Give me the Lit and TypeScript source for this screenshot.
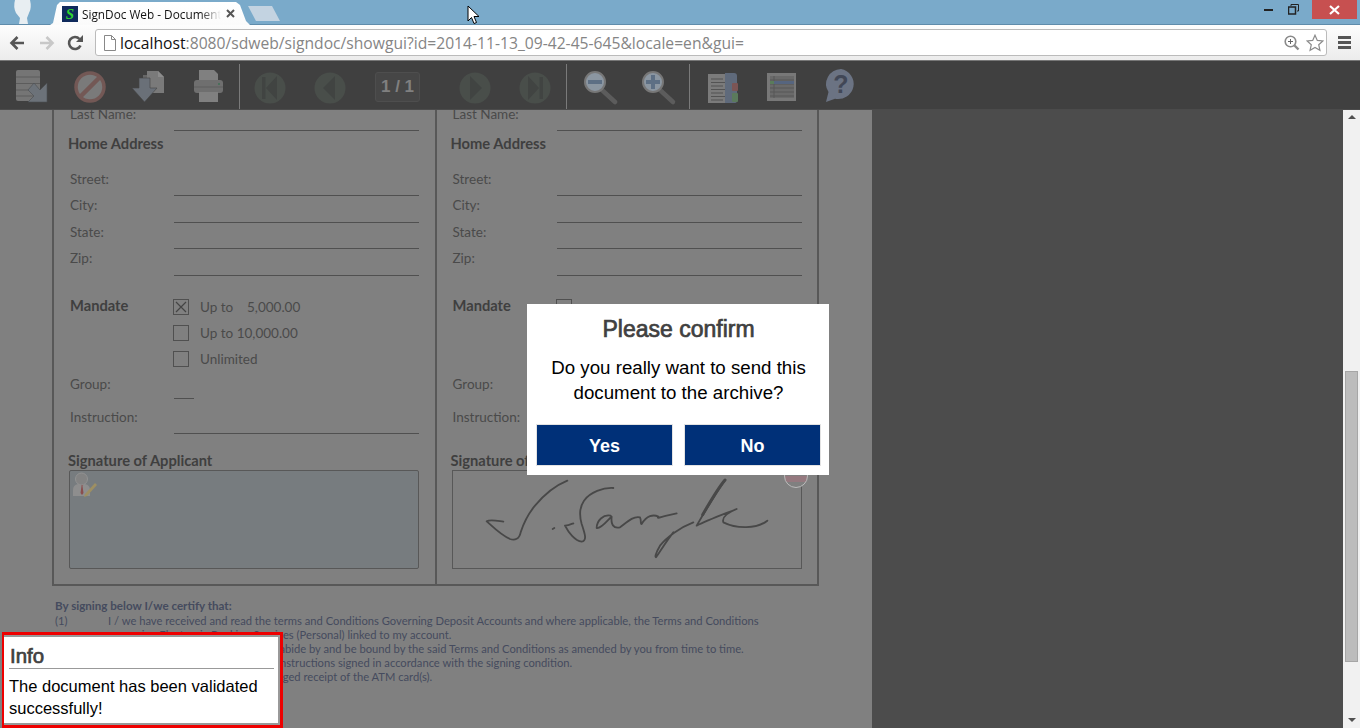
import { LitElement, html, css, svg } from "lit";
import { customElement } from "lit/decorators.js";

const toolIcons = {
  archive: svg`<path d="M4 11q0-2 2-2h20q2 0 2 2v29H6q-2 0-2-2z" fill="#757575"/><path d="M4 16h24M4 22.500h24M4 29h24M4 35h24" stroke="#5c5c5c" stroke-width="1"/><path d="M35 22V41H16l6-6-6-6 6-7 6 7z" fill="#6c7279" stroke="#4a4d50" stroke-width=".6"/>`,
  stop: svg`<circle cx="19" cy="26" r="14" fill="#7a7a7a" stroke="#735855" stroke-width="3.500"/><path d="M9 36L29 16" stroke="#735855" stroke-width="4.500"/>`,
  docs: svg`<path d="M13 14h6v16h-6z" fill="#676767"/><path d="M17 10h11l6 6v16H17z" fill="#7a7a7a"/><path d="M28 10v6h6" fill="#8c8c8c"/><path d="M9 17h11v10h7L14.500 41 2 27h7z" fill="#6a7078" stroke="#454545" stroke-width=".6"/>`,
  print: svg`<path d="M10 9h15l4 4v8H10z" fill="#808080"/><rect x="5" y="19" width="29" height="13" rx="3" fill="#6f6f6f"/><rect x="10" y="31" width="19" height="10" fill="#808080"/><path d="M5 26h29" stroke="#5f5f5f"/><circle cx="30" cy="23" r="1" fill="#3f6f55"/>`,
  first: svg`<circle cx="20" cy="27" r="15.500" fill="#494e4a"/><path d="M12 16h3.500v22H12zM27 15v24L16 27z" fill="#414442"/>`,
  prev: svg`<circle cx="20" cy="27" r="15.500" fill="#494e4a"/><path d="M25 15v24L13 27z" fill="#414442"/>`,
  next: svg`<circle cx="20" cy="27" r="15.500" fill="#494e4a"/><path d="M15 15v24L27 27z" fill="#414442"/>`,
  last: svg`<circle cx="20" cy="27" r="15.500" fill="#494e4a"/><path d="M28 16h-3.500v22H28zM13 15v24L24 27z" fill="#414442"/>`,
  out: svg`<path d="M24 29l13 12" stroke="#5c5c5c" stroke-width="4.500" stroke-linecap="round"/><circle cx="17" cy="21" r="10" fill="#8b96a1" stroke="#777" stroke-width="2"/><rect x="10" y="19" width="14" height="4" fill="#5d6f84"/>`,
  in: svg`<g transform="translate(-2 0)"><path d="M24 29l13 12" stroke="#5c5c5c" stroke-width="4.500" stroke-linecap="round"/><circle cx="17" cy="21" r="10" fill="#8b96a1" stroke="#777" stroke-width="2"/><path d="M10 19h5v-5h4v5h5v4h-5v5h-4v-5h-5z" fill="#5d6f84"/></g>`,
  book: svg`<rect x="5" y="13" width="24" height="29" fill="#7b7b7b"/><path d="M8 18h12M8 21.500h14M8 25h12M8 28.500h14M8 32h12M8 35.500h14M8 39h12" stroke="#535353"/><path d="M22 12h9q3 0 3 3v25q0 2-3 2h-9z" fill="#5f6a7b"/><rect x="29" y="22" width="6" height="8" rx="1" fill="#7c5555"/><rect x="29" y="32" width="6" height="9" rx="1" fill="#5b7a5c"/>`,
  table: svg`<g transform="translate(1 0)"><rect x="4" y="12" width="29" height="28" fill="#787878"/><rect x="7" y="15" width="24" height="22" fill="#6a6a6a"/><path d="M7 19h24M7 23h24M7 27h24M7 31h24M7 35h24M11 15v22" stroke="#565656"/><rect x="11" y="20" width="20" height="3" fill="#56657f"/><rect x="7" y="20" width="4" height="3" fill="#5a7c5a"/></g>`,
  help: svg`<path d="M21 8a15.500 15 0 1 1-6 29.800L6 41l2.500-10A15.500 15 0 0 1 21 8z" fill="#6b7383"/><text x="21" y="32" text-anchor="middle" class="qmark">?</text>`,
};

@customElement("app-root")
export class AppRoot extends LitElement {
  static styles = css`
    :host { display: block; width: 1360px; height: 728px; overflow: hidden; position: relative; font-family: "Liberation Sans", Arial, sans-serif; }
    .shell { display: flex; flex-direction: column; height: 728px; }

    .titlebar { height: 25px; flex: none; background: #7aaaca; border-bottom: 1px solid #5f8cab; box-sizing: border-box; display: flex; position: relative; }
    .avatar { position: absolute; left: 13px; top: 0; }
    .tab { margin-left: 50px; margin-top: 2px; width: 200px; height: 23px; background: linear-gradient(#fff, #fbfbfb); clip-path: polygon(0 100%, 3px 21px, 7px 3px, 10px 0, 186px 0, 190px 3px, 196px 19px, 200px 100%); display: flex; align-items: center; flex: none; }
    .favicon { width: 16px; height: 16px; margin-left: 12px; background: #0f2a5c; color: #2fd32f; font: italic bold 15px/16px "Liberation Serif", serif; text-align: center; flex: none; }
    .tabtitle { margin-left: 4px; width: 139px; white-space: nowrap; overflow: hidden; font: 11.800px/16px "Open Sans", sans-serif; color: #111; -webkit-mask-image: linear-gradient(90deg, #000 85%, transparent); mask-image: linear-gradient(90deg, #000 85%, transparent); }
    .tabclose { margin-left: 5px; width: 9px; height: 9px; }
    .newtab { margin: 6px 0 0 -2px; width: 32px; height: 15px; background: #c3d3e1; clip-path: polygon(0 0, 24px 0, 32px 100%, 8px 100%); flex: none; }
    .winctl { margin-left: auto; display: flex; align-items: flex-start; padding-right: 3px; }
    .winbtn { width: 25px; height: 19px; display: flex; align-items: center; justify-content: center; }
    .close { width: 45px; margin-left: 6px; background: #c75050; }

    .navbar { height: 36px; flex: none; box-sizing: border-box; background: linear-gradient(#fdfdfd, #ececec); display: flex; align-items: center; padding: 0 9px 0 9px; border-bottom: 1px solid #777; }
    .navbtn { width: 29px; height: 20px; display: flex; align-items: center; flex: none; }
    .omni { margin-left: -1px; width: 1232px; height: 27px; box-sizing: border-box; flex: none; background: #fff; border: 1px solid #bbb; border-radius: 3px; display: flex; align-items: center; padding: 0 2px 0 7px; }
    .url { margin-left: 3px; font: 15.670px/18px "Open Sans", sans-serif; color: #858585; white-space: nowrap; flex: 1; }
    .url b { font-weight: 400; color: #111; }
    .menu { margin-left: auto; display: flex; flex-direction: column; gap: 2px; width: 13px; }
    .menu i { display: block; height: 3px; background: #555; }

    .apptools { height: 49px; flex: none; box-sizing: border-box; background: #404040; border-bottom: 1px solid #4b4b4b; display: flex; }
    .group { display: flex; gap: 19px; padding: 0 10px 0 12px; border-right: 1px solid #7a7a7a; margin-top: 3px; }
    .group .tool { margin-top: -3px; }
    .g2 { gap: 20px; padding: 0 11px 0 10px; }
    .g3 { gap: 20px; padding: 0 11px 0 11px; }
    .g4 { gap: 18.500px; padding: 0 0 0 13px; border-right: none; }
    .tool { width: 40px; height: 49px; display: block; flex: none; }
    .qmark { font: bold 25px "Liberation Sans", sans-serif; fill: #414756; }
    .pagebox { width: 45px; height: 30px; margin: 8px 15px 0 5px; flex: none; box-sizing: border-box; background: #464646; border: 1px solid #4e4e4e; border-radius: 3px; color: #808080; font: bold 17px/28px "Liberation Sans", sans-serif; text-align: center; }

    .viewer { flex: 1; display: flex; min-height: 0; background: #4c4c4c; }
    .paper { width: 872px; flex: none; background: #808080; overflow: hidden; font-family: Lato, sans-serif; color: #444; }
    .gutter { flex: 1; }
    .scroll { width: 17px; flex: none; background: #f1f1f1; box-sizing: border-box; padding: 5px 2px 6px; display: flex; flex-direction: column; align-items: center; }
    .arrowup, .arrowdown { width: 0; height: 0; border-left: 4px solid transparent; border-right: 4px solid transparent; }
    .arrowup { border-bottom: 4px solid #505050; }
    .arrowdown { border-top: 4px solid #505050; margin-top: auto; }
    .thumb { width: 13px; height: 291px; box-sizing: border-box; background: #bcbcbc; border: 1px solid #a6a6a6; margin-top: 252px; flex: none; }

    .form { margin: -10px 0 0 52px; width: 767px; box-sizing: border-box; border: 2px solid #585858; display: flex; }
    .col { width: 381px; flex: none; box-sizing: border-box; padding: 3px 0 15px 16px; }
    .col + .col { border-left: 2px solid #585858; width: 382px; padding-left: 15.500px; }
    .field { display: grid; grid-template-columns: 104px 245px; height: 26.400px; box-sizing: border-box; }
    .field label { font-size: 13.500px; line-height: 20px; color: #4a4a4a; margin-top: -1px; }
    .value { border-bottom: 1px solid #505050; }
    .short { width: 20px; }
    .head { font-weight: 700; font-size: 14.700px; line-height: 19px; color: #3f3f3f; white-space: nowrap; }
    .h1 { margin: 3px 0 16.600px -2px; }
    .group-field { margin-top: 6px; }
    .group-field label { margin-top: 1px; }
    .instr-field { margin-top: 9px; }
    .mandate { display: grid; grid-template-columns: 103px auto; height: 91px; box-sizing: border-box; padding-top: 23px; }
    .mandate .head { margin-top: -3px; }
    .opts { display: flex; flex-direction: column; gap: 10px; }
    .opt { display: flex; height: 16px; align-items: center; gap: 11px; font-size: 13.500px; color: #4a4a4a; white-space: pre; }
    .box { width: 16px; height: 16px; box-sizing: border-box; border: 1px solid #505050; flex: none; }
    .box svg { display: block; }
    .h2 { margin: 16.600px 0 0 -2px; }
    .sigbox { position: relative; width: 350px; height: 99px; box-sizing: border-box; border: 1px solid #585858; margin-left: -1px; }
    .sigbox.filled { background: #777c7f; border-radius: 2px; }
    .person { position: absolute; left: 2px; top: 1px; }
    .signature { position: absolute; left: 27px; top: 3px; }
    .pin { position: absolute; right: -7px; top: -7px; width: 24px; height: 24px; box-sizing: border-box; border-radius: 50%; border: 1px solid #bbb; background: linear-gradient(#808080 50%, #95797f 50%, #95797f 78%, #808080 78%); }

    .terms { margin: 13px 0 0 55px; font-size: 11.200px; line-height: 14px; color: #454b5e; width: 720px; }
    .terms .b { font-weight: 700; font-size: 11.600px; margin-bottom: 1px; }
    .term { display: grid; grid-template-columns: 53px auto; white-space: nowrap; }

    .dialog { position: absolute; left: 527px; top: 304px; width: 302px; height: 171px; box-sizing: border-box; background: #fff; padding: 13px 8px 0 9px; text-align: center; }
    .dialog h2 { margin: 0; font-size: 23px; line-height: 25px; font-weight: 400; color: #404040; -webkit-text-stroke: .7px #404040; }
    .dialog p { margin: 13px 0 19px; font-size: 18.700px; line-height: 25px; color: #000; white-space: nowrap; }
    .btns { display: flex; justify-content: space-between; }
    .btn { width: 137px; height: 42px; box-sizing: border-box; padding-top: 1px; background: #003078; border: 1px solid #e3e3e3; color: #fff; font: bold 18px/40px "Liberation Sans", sans-serif; text-align: center; }

    .info { position: absolute; left: 2px; top: 632px; width: 281px; height: 96px; box-sizing: border-box; background: #fff; border: 3px solid #ee0000; border-left-width: 2px; box-shadow: inset -2px -2px 0 #999, inset 0 2px 0 #999; padding: 9px 7px 0 5px; }
    .info h3 { margin: 0; font-size: 20.400px; line-height: 24px; font-weight: 400; color: #404040; -webkit-text-stroke: .7px #404040; border-bottom: 1px solid #999; padding-left: 1px; width: 264px; box-sizing: content-box; }
    .info p { margin: 6px 0 0; font-size: 16.500px; line-height: 22px; color: #000; width: 260px; }
    .cursor { position: absolute; left: 467px; top: 5px; }
  `;

  private tool(name: keyof typeof toolIcons) {
    return html`<svg class="tool" viewBox="0 0 40 49">${toolIcons[name]}</svg>`;
  }

  private field(label: string, cls = "", short = false) {
    return html`<div class="field ${cls}"><label>${label}</label><div class="value ${short ? "short" : ""}"></div></div>`;
  }

  private opt(text: string, checked = false) {
    return html`<div class="opt"><span class="box">${checked
      ? html`<svg width="14" height="14" viewBox="0 0 14 14"><path d="M2 2l10 10M12 2L2 12" stroke="#444" stroke-width="1.200"/></svg>`
      : ""}</span>${text ? html`<span>${text}</span>` : ""}</div>`;
  }

  private column(second: boolean) {
    return html`<div class="col">
      ${this.field("Last Name:")}
      <div class="head h1">Home Address</div>
      ${this.field("Street:")}${this.field("City:")}${this.field("State:")}${this.field("Zip:")}
      <div class="mandate">
        <div class="head">Mandate</div>
        <div class="opts">
          ${second
            ? html`${this.opt("")}${this.opt("")}${this.opt("")}`
            : html`${this.opt("Up to    5,000.00", true)}${this.opt("Up to 10,000.00")}${this.opt("Unlimited")}`}
        </div>
      </div>
      ${this.field("Group:", "group-field", true)}
      ${this.field("Instruction:", "instr-field")}
      <div class="head h2">Signature of Applicant</div>
      ${second
        ? html`<div class="sigbox">
            <span class="pin"></span>
            <svg class="signature" width="300" height="90" viewBox="0 0 900 270" fill="none" stroke="#484848" stroke-width="5.500" stroke-linecap="round" stroke-linejoin="round">
              <path d="M262 20C225 35 190 65 165 95C140 125 130 150 122 175C118 195 105 200 90 195C65 185 40 160 20 142C30 135 50 140 70 143"/>
              <path d="M218 165l5-3"/>
              <path d="M400 42C370 40 330 55 312 80C298 100 298 125 305 150C315 180 322 200 305 203C285 200 265 175 255 155C265 155 275 150 280 148"/>
              <path d="M392 125C370 120 350 140 350 162C365 165 385 135 395 128C392 150 400 165 420 160C440 145 460 125 480 130C485 140 480 150 485 150C500 125 520 120 535 128C530 135 540 130 560 125L590 118"/>
              <path d="M640 145C600 160 560 190 540 215C525 240 525 250 528 250C545 225 560 200 580 175"/>
              <path d="M735 18C700 70 670 120 650 155C680 140 720 125 770 105C745 115 725 130 730 145C770 165 830 165 862 140"/>
              <path d="M735 18C712 45 690 85 668 122" stroke-width="9"/>
            </svg>
          </div>`
        : html`<div class="sigbox filled">
            <svg class="person" width="26" height="26" viewBox="0 0 26 26">
              <path d="M1 24v-6q0-5 5-6h7q5 1 5 6v6z" fill="#8e8e8e"/>
              <path d="M8 12l1.500 2-1 7 1.500 2 1.500-2-1-7 1.500-2z" fill="#8a4d4d"/>
              <circle cx="9.500" cy="7" r="6" fill="#838383" stroke="#929292"/>
              <path d="M13 22l10-11 2 2-10 11-3 1z" fill="#9e8f62"/>
            </svg>
          </div>`}
    </div>`;
  }

  render() {
    return html`<div class="shell">
      <div class="titlebar">
        <svg class="avatar" width="20" height="24" viewBox="0 0 20 24"><path d="M2 0h15q2 8-1 13l-2 5 1 6H6l1-6-4-5Q0 7 2 0z" fill="#e8eef2"/></svg>
        <div class="tab">
          <div class="favicon">S</div>
          <div class="tabtitle">SignDoc Web - Document Viewer</div>
          <svg class="tabclose" viewBox="0 0 9 9"><path d="M1 1l7 7M8 1L1 8" stroke="#555" stroke-width="2"/></svg>
        </div>
        <div class="newtab"></div>
        <div class="winctl">
          <div class="winbtn"><svg width="10" height="4" viewBox="0 0 10 4"><rect y="1" width="9" height="2" fill="#222"/></svg></div>
          <div class="winbtn"><svg width="11" height="11" viewBox="0 0 11 11" fill="none" stroke="#222"><rect x=".5" y="3" width="7" height="7" stroke-width="1.500"/><path d="M3 2V.5h7.500V7H9"/></svg></div>
          <div class="winbtn close"><svg width="11" height="10" viewBox="0 0 11 10"><path d="M1 1l9 8M10 1L1 9" stroke="#fff" stroke-width="2.200"/></svg></div>
        </div>
      </div>
      <div class="navbar">
        <div class="navbtn"><svg width="17" height="16" viewBox="0 0 17 16"><path d="M15 8H3M8.500 2L2.500 8l6 6" fill="none" stroke="#565656" stroke-width="2.600"/></svg></div>
        <div class="navbtn"><svg width="17" height="16" viewBox="0 0 17 16"><path d="M2 8h12M8.500 2l6 6-6 6" fill="none" stroke="#c8c8c8" stroke-width="2.600"/></svg></div>
        <div class="navbtn"><svg width="17" height="16" viewBox="0 0 17 16"><path d="M13.500 10.500A6 6 0 1 1 12.500 4" fill="none" stroke="#555" stroke-width="2.600"/><path d="M9 7h7V0z" fill="#555"/></svg></div>
        <div class="omni">
          <svg width="14" height="16" viewBox="0 0 14 16"><path d="M1.500.5h7l4 4v11h-11z M8.500.5v4h4" fill="#fff" stroke="#888"/></svg>
          <div class="url"><b>localhost</b>:8080/sdweb/signdoc/showgui?id=2014-11-13_09-42-45-645&locale=en&gui=</div>
          <svg width="16" height="16" viewBox="0 0 16 16" fill="none" stroke="#8a8a8a"><circle cx="6.500" cy="6.500" r="5.300" stroke-width="1.600"/><path d="M10.500 10.500l4 4" stroke-width="2.400"/><path d="M4 6.500h5M6.500 4v5" stroke="#666"/></svg>
          <svg style="margin-left:6px" width="18" height="18" viewBox="0 0 18 18"><path d="M9 1.200l2.300 5.200 5.600.6-4.200 3.700 1.200 5.500L9 13.400l-4.900 2.800 1.200-5.500L1.100 7l5.600-.6z" fill="#fff" stroke="#8a8a8a" stroke-width="1.200"/></svg>
        </div>
        <div class="menu"><i></i><i></i><i></i></div>
      </div>
      <div class="apptools">
        <div class="group">${this.tool("archive")}${this.tool("stop")}${this.tool("docs")}${this.tool("print")}</div>
        <div class="group g2">
          ${this.tool("first")}${this.tool("prev")}
          <div class="pagebox">1 / 1</div>
          ${this.tool("next")}${this.tool("last")}
        </div>
        <div class="group g3">${this.tool("out")}${this.tool("in")}</div>
        <div class="group g4">${this.tool("book")}${this.tool("table")}${this.tool("help")}</div>
      </div>
      <div class="viewer">
        <div class="paper">
          <div class="form">${this.column(false)}${this.column(true)}</div>
          <div class="terms">
            <div class="b">By signing below I/we certify that:</div>
            <div class="term"><span>(1)</span><span>I / we have received and read the terms and Conditions Governing Deposit Accounts and where applicable, the Terms and Conditions</span></div>
            <div class="term"><span></span><span>governing Electronic Banking Services (Personal) linked to my account.</span></div>
            <div class="term"><span>(2)</span><span>I / we fully agree and undertake to abide by and be bound by the said Terms and Conditions as amended by you from time to time.</span></div>
            <div class="term"><span>(3)</span><span>You may at your option act on any instructions signed in accordance with the signing condition.</span></div>
            <div class="term"><span>(4)</span><span>I / we do confirm having acknowledged receipt of the ATM card(s).</span></div>
          </div>
        </div>
        <div class="gutter"></div>
        <div class="scroll"><div class="arrowup"></div><div class="thumb"></div><div class="arrowdown"></div></div>
      </div>
    </div>
    <div class="dialog">
      <h2>Please confirm</h2>
      <p>Do you really want to send this<br />document to the archive?</p>
      <div class="btns"><div class="btn">Yes</div><div class="btn">No</div></div>
    </div>
    <div class="info">
      <h3>Info</h3>
      <p>The document has been validated successfully!</p>
    </div>
    <svg class="cursor" width="13" height="20" viewBox="0 0 13 20"><path d="M1 1v15l3.500-3.500 2.500 6 2.500-1-2.500-6h5z" fill="#fff" stroke="#000"/></svg>`;
  }
}
